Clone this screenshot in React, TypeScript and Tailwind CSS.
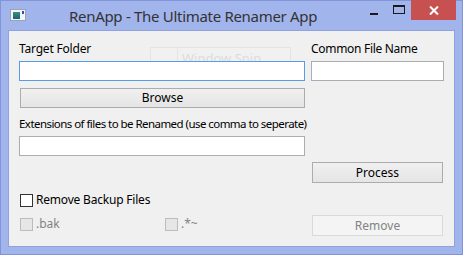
import React from 'react';

const font = { fontFamily: '"Noto Sans", "Open Sans", sans-serif' };

function TextBox({ focused = false, className = '' }: { focused?: boolean; className?: string }) {
    return (
        <div
            className={`h-[20px] bg-white border ${focused ? 'border-[#569de5]' : 'border-[#abadb3]'} ${className}`}
        />
    );
}

function Button({ label, disabled = false, className = '' }: { label: string; disabled?: boolean; className?: string }) {
    return (
        <div
            className={`flex items-center justify-center text-[12px] border ${
                disabled
                    ? 'border-[#d9d9d9] bg-[#f4f4f4] text-[#838383]'
                    : 'border-[#acacac] bg-gradient-to-b from-[#f0f0f0] to-[#e5e5e5] text-black'
            } ${className}`}
        >
            {label}
        </div>
    );
}

function CheckBox({ label, disabled = false, className = '' }: { label: string; disabled?: boolean; className?: string }) {
    return (
        <div className={`flex items-center gap-[3px] ${className}`}>
            <div
                className={`w-[13px] h-[13px] border ${
                    disabled ? 'border-[#bcbcbc] bg-[#e6e6e6]' : 'border-[#333333] bg-white'
                }`}
            />
            <span className={`text-[12px] leading-[14px] ${disabled ? 'text-[#838383]' : 'text-black'}`}>{label}</span>
        </div>
    );
}

export default function App() {
    return (
        <div className="w-[463px] h-[255px] bg-[#a1b4ec] border border-[#7f95d8] flex flex-col" style={font}>
            {/* Title bar */}
            <div className="h-[29px] flex items-start relative">
                <div className="ml-[9px] mt-[8px] w-[16px] h-[12px] bg-[#f4f4f4] border border-[#9aa4b4] flex items-center pl-[2px] pr-[1px] gap-[2px]">
                    <div className="w-[8px] h-[7px] bg-gradient-to-b from-[#3a8f7a] to-[#1f5f7a]" />
                    <div className="w-[2px] h-[3px] bg-[#3050c0] self-start mt-[1px]" />
                </div>
                <div className="ml-[43px] mt-[4px] text-[15px] leading-[22px] text-[#333333] tracking-[-0.3px]">
                    RenApp - The Ultimate Renamer App
                </div>
                {/* Caption buttons */}
                <div className="absolute top-[-1px] right-[6px] flex items-start">
                    <div className="w-[25px] h-[20px] flex items-center justify-center">
                        <div className="w-[8px] h-[2px] bg-[#1a1a1a] mt-[7px]" />
                    </div>
                    <div className="w-[25px] h-[20px] flex items-center justify-center">
                        <div className="w-[12px] h-[9px] border border-[#1a1a1a] border-t-2 mb-[2px]" />
                    </div>
                    <div className="w-[45px] h-[20px] bg-[#c75050] flex items-center justify-center">
                        <svg width="10" height="9" viewBox="0 0 10 9">
                            <path d="M1 0.5 L9 8.5 M9 0.5 L1 8.5" stroke="white" strokeWidth="2" />
                        </svg>
                    </div>
                </div>
            </div>

            {/* Client area */}
            <div className="ml-[7px] mr-[7px] h-[217px] bg-[#f0f0f0] border border-[#8ea3dc] relative pl-[10px]">
                {/* Screen capture ghost overlay */}
                <div className="absolute left-[141px] top-[16px] w-[141px] h-[22px] border border-[#e4e4e4] flex bg-[#f2f2f2]/40">
                    <div className="w-[27px] border-r border-[#e4e4e4]" />
                    <div className="pl-[4px] text-[13px] leading-[20px] text-[#dcdcdc]">Window Snip</div>
                </div>

                <div className="relative flex">
                    <div className="w-[286px] flex flex-col">
                        <div className="mt-[10px] h-[16px] text-[12px] leading-[16px] text-black tracking-[-0.2px]">Target Folder</div>
                        <TextBox focused className="mt-[4px]" />
                        <Button label="Browse" className="mt-[7px] ml-[1px] w-[285px] h-[20px]" />
                        <div className="mt-[8px] h-[16px] text-[11.5px] leading-[16px] text-black tracking-[-0.55px] whitespace-nowrap">
                            Extensions of files to be Renamed (use comma to seperate)
                        </div>
                        <TextBox className="mt-[4px]" />
                    </div>
                    <div className="ml-[6px] w-[133px] flex flex-col">
                        <div className="mt-[10px] h-[16px] text-[12px] leading-[16px] text-black tracking-[-0.3px] whitespace-nowrap">Common File Name</div>
                        <TextBox className="mt-[4px]" />
                        <Button label="Process" className="mt-[81px] ml-[1px] w-[131px] h-[21px]" />
                    </div>
                </div>

                <div className="flex flex-col">
                    <CheckBox label="Remove Backup Files" className="mt-[10px] ml-[1px] tracking-[-0.2px]" />
                    <div className="flex items-start mt-[8px]">
                        <CheckBox label=".bak" disabled className="ml-[1px] mt-[2px] w-[145px]" />
                        <CheckBox label=".*~" disabled className="mt-[2px] w-[147px]" />
                        <Button label="Remove" disabled className="w-[131px] h-[21px]" />
                    </div>
                </div>
            </div>
        </div>
    );
}
